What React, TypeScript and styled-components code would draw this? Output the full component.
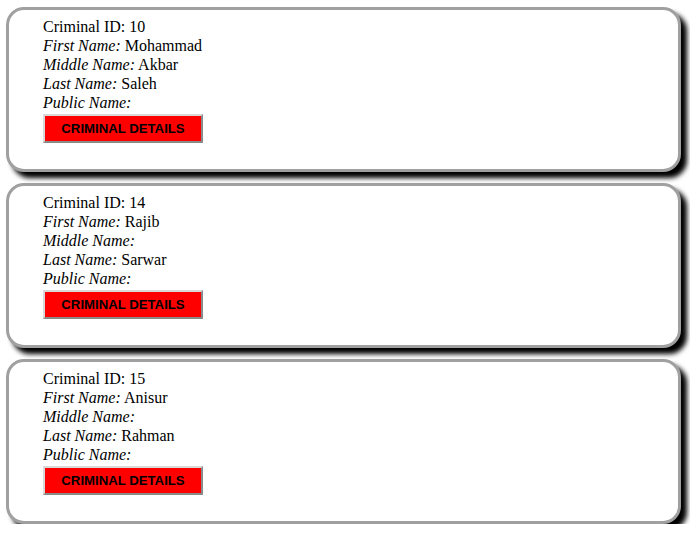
import React from "react";
import styled, { createGlobalStyle } from "styled-components";

const Global = createGlobalStyle`
  html, body { margin: 0; padding: 0; background: #fff; }
  body { font-family: "Liberation Serif", "Times New Roman", serif; font-size: 16px; color: #000; }
`;

const List = styled.div`
  display: flex;
  flex-direction: column;
  gap: 11px;
  padding: 7px 0 0 6px;
  width: 675px;
`;

const Card = styled.div`
  border: 3px solid #a0a0a0;
  border-radius: 18px;
  background: #fff;
  box-shadow: 6px 6px 5px #000;
  padding: 7px 30px 26px 34px;
  display: flex;
  flex-direction: column;
  align-items: flex-start;
`;

const Line = styled.div`
  line-height: 19px;
  white-space: nowrap;
`;

const Label = styled.i`
  font-style: italic;
`;

const Button = styled.button`
  margin-top: 2px;
  width: 160px;
  height: 29px;
  background: #ff0000;
  border: 2px solid;
  border-color: #d8d8d8 #8a8a8a #8a8a8a #d8d8d8;
  font-family: "Liberation Sans", Arial, sans-serif;
  font-weight: bold;
  font-size: 13.2px;
  color: #000;
  text-transform: uppercase;
  padding: 0;
  cursor: pointer;
`;

type Criminal = { id: number; first: string; middle: string; last: string; pub: string };

const data: Criminal[] = [
  { id: 10, first: "Mohammad", middle: "Akbar", last: "Saleh", pub: "" },
  { id: 14, first: "Rajib", middle: "", last: "Sarwar", pub: "" },
  { id: 15, first: "Anisur", middle: "", last: "Rahman", pub: "" },
];

export default function App() {
  return (
    <>
      <Global />
      <List>
        {data.map((c) => (
          <Card key={c.id}>
            <Line>Criminal ID: {c.id}</Line>
            <Line>
              <Label>First Name:</Label> {c.first}
            </Line>
            <Line>
              <Label>Middle Name:</Label> {c.middle}
            </Line>
            <Line>
              <Label>Last Name:</Label> {c.last}
            </Line>
            <Line>
              <Label>Public Name:</Label> {c.pub}
            </Line>
            <Button>Criminal Details</Button>
          </Card>
        ))}
      </List>
    </>
  );
}
